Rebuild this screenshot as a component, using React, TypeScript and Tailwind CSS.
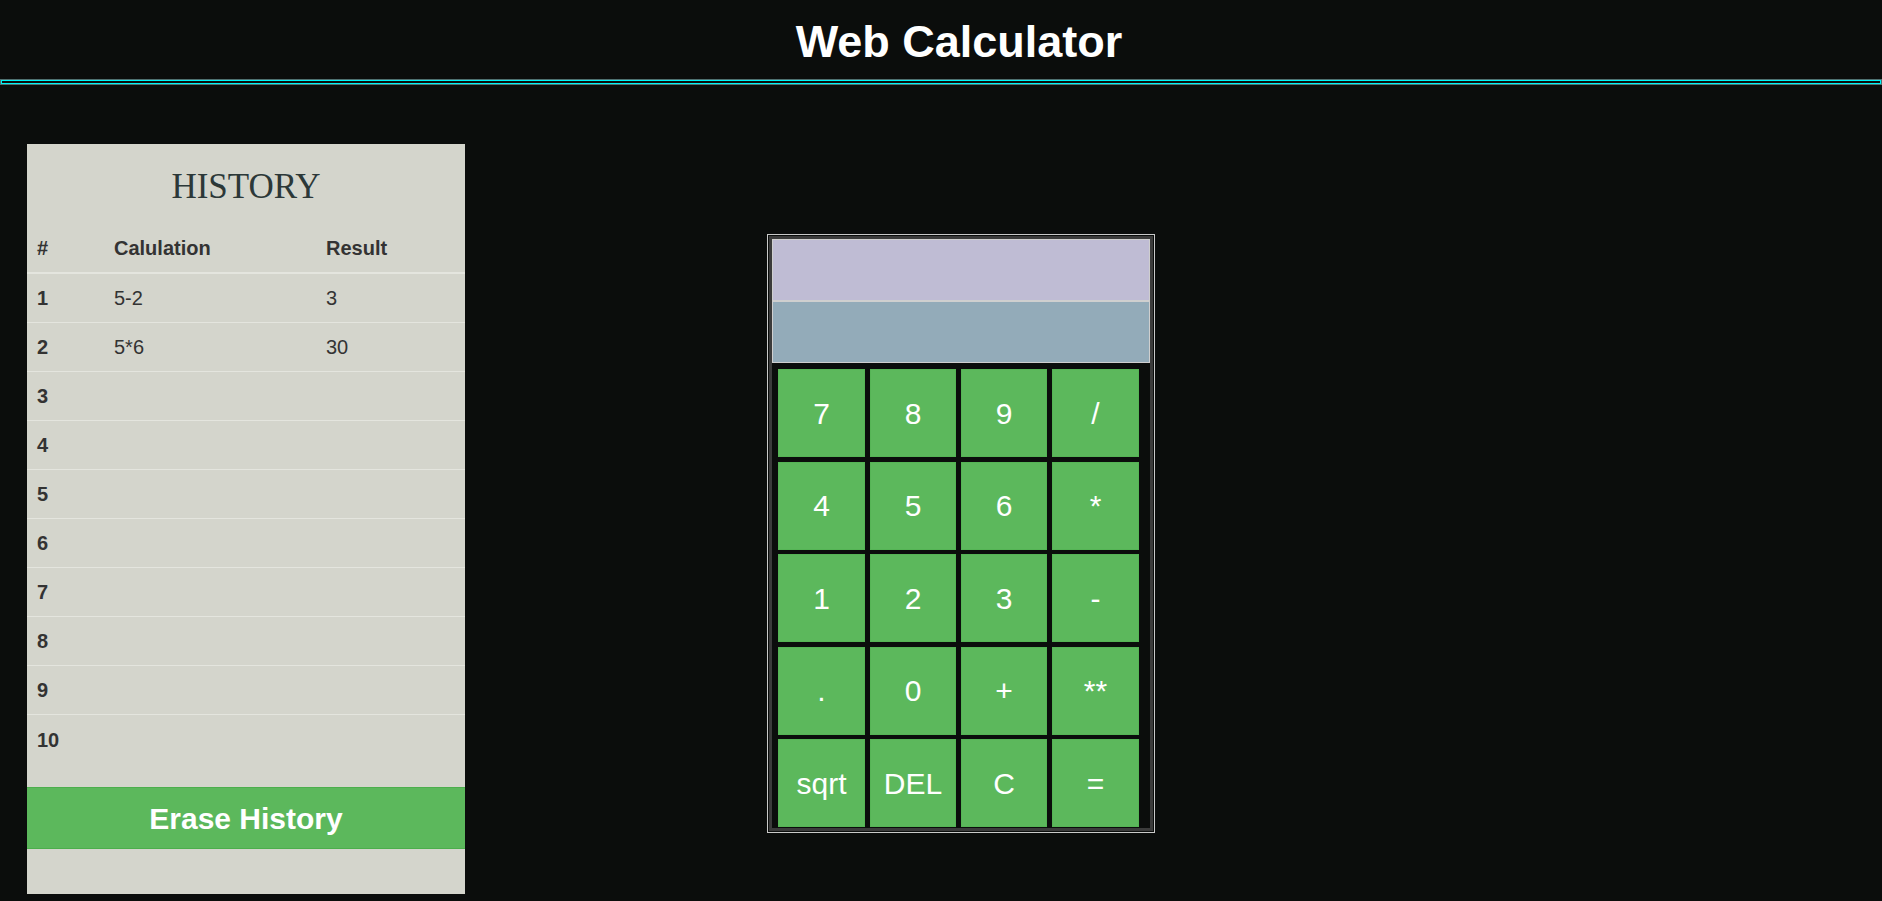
import React from "react";

const rows: { n: number; calc: string; res: string }[] = [
  { n: 1, calc: "5-2", res: "3" },
  { n: 2, calc: "5*6", res: "30" },
  { n: 3, calc: "", res: "" },
  { n: 4, calc: "", res: "" },
  { n: 5, calc: "", res: "" },
  { n: 6, calc: "", res: "" },
  { n: 7, calc: "", res: "" },
  { n: 8, calc: "", res: "" },
  { n: 9, calc: "", res: "" },
  { n: 10, calc: "", res: "" },
];

const keys = ["7", "8", "9", "/", "4", "5", "6", "*", "1", "2", "3", "-", ".", "0", "+", "**", "sqrt", "DEL", "C", "="];

export default function App() {
  return (
    <div
      className="min-h-[901px] w-full bg-[#0b0d0c]"
      style={{ fontFamily: '"Liberation Sans", Arial, sans-serif' }}
    >
      <header className="pt-[19px]">
        <h1 className="pl-[36px] text-center text-[45px] font-bold leading-none text-white">Web Calculator</h1>
        <div className="mt-[15px] border border-[#4f7070]">
          <div className="h-[4px] border border-[#00f4f6]"></div>
        </div>
      </header>

      <main className="flex items-start pl-[27px] pt-[59px]">
        <section className="w-[438px] bg-[#d4d5cc] pb-[45px] text-[#333]">
          <h2
            className="mt-[25px] mb-[20px] text-center text-[35px] leading-none text-[#2c3838]"
            style={{ fontFamily: '"Liberation Serif", "Times New Roman", serif' }}
          >
            HISTORY
          </h2>
          <div className="grid h-[50px] grid-cols-[77px_212px_1fr] items-center border-b-2 border-[#e4e5de] text-[20px] font-bold">
            <div className="pl-[10px]">#</div>
            <div className="pl-[10px]">Calulation</div>
            <div className="pl-[10px]">Result</div>
          </div>
          {rows.map((r, i) => (
            <div
              key={r.n}
              className={
                i < 9
                  ? "grid h-[49px] grid-cols-[77px_212px_1fr] items-center border-b border-[#e4e5de] text-[20px]"
                  : "grid h-[49px] grid-cols-[77px_212px_1fr] items-center text-[20px]"
              }
            >
              <div className="pl-[10px] font-bold">{r.n}</div>
              <div className="pl-[10px]">{r.calc}</div>
              <div className="pl-[10px]">{r.res}</div>
            </div>
          ))}
          <button className="mt-[23px] flex h-[62px] w-full items-center justify-center border-y border-[#4cae4c] bg-[#5cb85c] text-[30px] font-bold text-white">
            Erase History
          </button>
        </section>

        <section className="ml-[302px] mt-[90px] w-[388px] border border-[#c9c9c9] bg-[#0b0d0c] p-[1px]">
          <div className="border-[3px] border-[#3b3b3b] bg-[#0b0d0c] pb-[1px]">
            <div className="border border-[#cfcfcf]">
              <div className="h-[62px] border-b-2 border-[#cfcfcf] bg-[#bfbcd4]"></div>
              <div className="h-[60px] bg-[#93abb9]"></div>
            </div>
            <div className="grid grid-cols-[87px_86px_86px_87px] gap-x-[5px] gap-y-[4.5px] pl-[6px] pt-[6px]">
              {keys.map((k) => (
                <button
                  key={k}
                  className="flex h-[88px] items-center justify-center border border-[#55b455] bg-[#5cb85c] text-[30px] text-white"
                >
                  {k}
                </button>
              ))}
            </div>
          </div>
        </section>
      </main>
    </div>
  );
}
